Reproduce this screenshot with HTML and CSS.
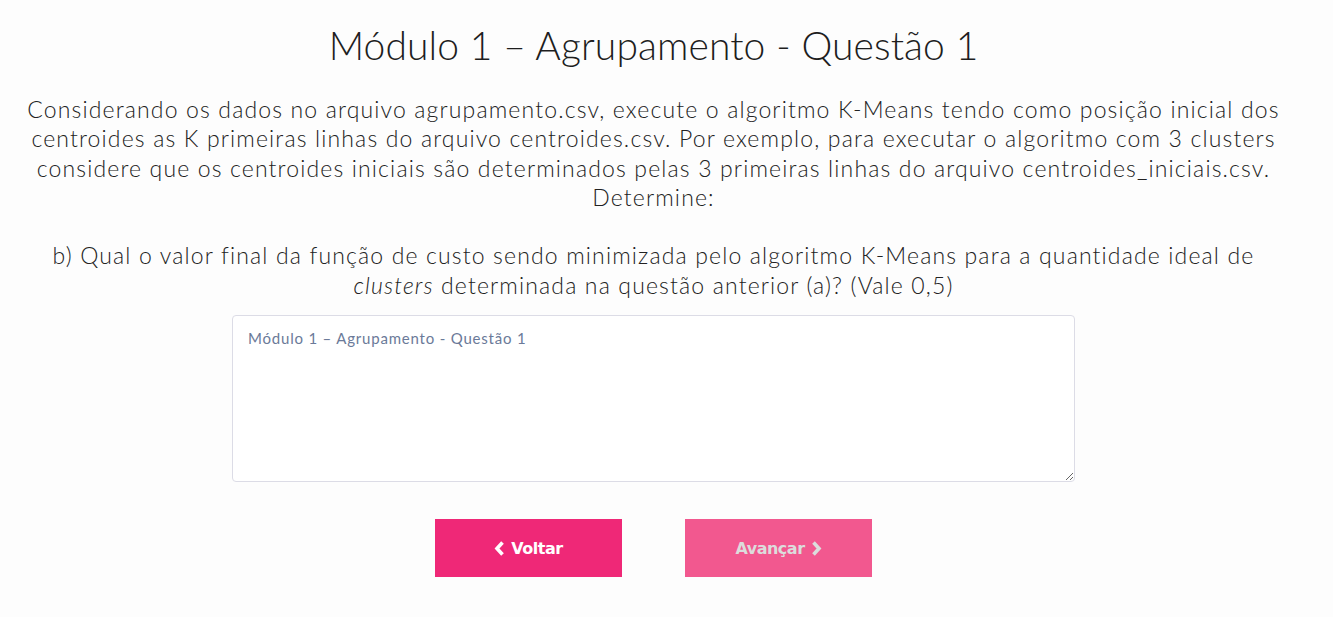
FILE: index.html
```html
<!DOCTYPE html>
<html lang="pt-BR">
<head>
<meta charset="utf-8">
<title>Módulo 1 – Agrupamento - Questão 1</title>
<link rel="stylesheet" href="styles.css">
</head>
<body>
<main class="page">
  <h1 class="title">Módulo 1 – Agrupamento - Questão 1</h1>
  <p class="statement">Considerando os dados no arquivo agrupamento.csv, execute o algoritmo K-Means tendo como posição inicial dos centroides as K primeiras linhas do arquivo centroides.csv. Por exemplo, para executar o algoritmo com 3 clusters considere que os centroides iniciais são determinados pelas 3 primeiras linhas do arquivo centroides_iniciais.csv. Determine:<br><br>b) Qual o valor final da função de custo sendo minimizada pelo algoritmo K-Means para a quantidade ideal de <em>clusters</em> determinada na questão anterior (a)? (Vale 0,5)</p>
  <textarea class="answer" placeholder="Módulo 1 – Agrupamento - Questão 1"></textarea>
  <div class="actions">
    <button class="btn">
      <svg class="chev" viewBox="0 0 11 15" width="11" height="15"><path d="M8.5 1.5 L3 7.5 L8.5 13.5" fill="none" stroke="currentColor" stroke-width="3.6" stroke-linecap="butt" stroke-linejoin="miter"/></svg>
      <span>Voltar</span>
    </button>
    <button class="btn btn-disabled">
      <span>Avançar</span>
      <svg class="chev" viewBox="0 0 11 15" width="11" height="15"><path d="M2.5 1.5 L8 7.5 L2.5 13.5" fill="none" stroke="currentColor" stroke-width="3.6" stroke-linecap="butt" stroke-linejoin="miter"/></svg>
    </button>
  </div>
</main>
</body>
</html>
```
FILE: styles.css
```css
html, body {
  margin: 0;
  padding: 0;
  background: #fdfdfd;
}
body {
  font-family: Lato, "Noto Sans", sans-serif;
  color: #222;
}
.page {
  width: 1307px;
  display: flex;
  flex-direction: column;
  align-items: center;
  padding-top: 21px;
}
.title {
  margin: 0;
  font-weight: 300;
  font-size: 39px;
  line-height: 48px;
  color: #1e1e1e;
  letter-spacing: 0.1px;
}
.statement {
  margin: 26px 0 0;
  width: 1270px;
  text-align: center;
  font-size: 23px;
  line-height: 29.3px;
  font-weight: 300;
  letter-spacing: 1.15px;
  color: #222;
}
.answer {
  box-sizing: border-box;
  margin-top: 15px;
  width: 843px;
  height: 167px;
  border: 1px solid #dcdce6;
  border-radius: 4px;
  background: #fff;
  padding: 13px 15px;
  font-family: Lato, "Noto Sans", sans-serif;
  font-size: 15px;
  letter-spacing: 0.8px;
  resize: vertical;
  outline: none;
}
.answer::placeholder {
  color: #6b7a99;
}
.actions {
  margin-top: 37px;
  display: flex;
  gap: 63px;
}
.btn {
  width: 187px;
  height: 58px;
  border: 0;
  border-radius: 0;
  background: #ef2877;
  color: #fff;
  font-family: "DejaVu Sans", Verdana, sans-serif;
  font-weight: 700;
  font-size: 16px;
  letter-spacing: -0.5px;
  display: flex;
  align-items: center;
  justify-content: center;
  gap: 6px;
  padding: 0;
}
.btn-disabled {
  background: #f2588f;
  color: #dcdcdc;
}
.chev {
  display: block;
}
```
